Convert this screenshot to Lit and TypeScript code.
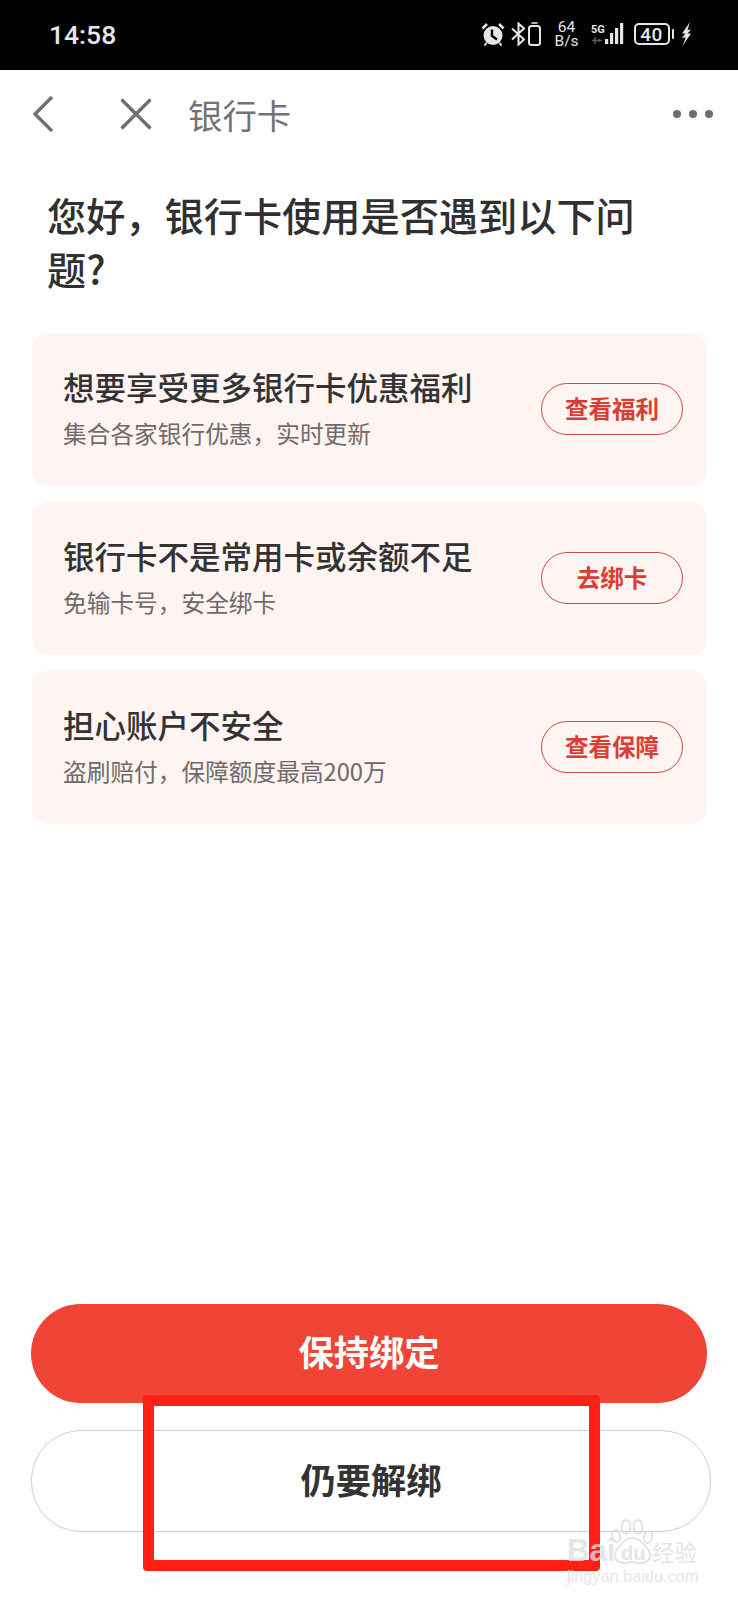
import { LitElement, html, css, svg } from "lit";
import { customElement } from "lit/decorators.js";

const cards = [
  { t: "想要享受更多银行卡优惠福利", s: "集合各家银行优惠，实时更新", b: "查看福利" },
  { t: "银行卡不是常用卡或余额不足", s: "免输卡号，安全绑卡", b: "去绑卡" },
  { t: "担心账户不安全", s: "盗刷赔付，保障额度最高200万", b: "查看保障" },
];

@customElement("app-root")
export class AppRoot extends LitElement {
  static styles = css`
    :host { display: block; width: 738px; height: 1600px; position: relative; overflow: hidden; background: #fff;
      font-family: "Noto Sans CJK SC", "Noto Sans", sans-serif; }
    .page { height: 1600px; display: flex; flex-direction: column; }
    .status { height: 70px; background: #000; color: #e6e6e6; display: flex; align-items: center; padding: 0 46px 0 49px; box-sizing: border-box; flex: none; }
    .time { font: 500 26.500px Roboto, sans-serif; margin-top: -2px; }
    .sicons { margin-left: auto; display: flex; align-items: center; margin-top: -2px; }
    .speed { font: 400 15.5px/14px Roboto, sans-serif; width: 24px; margin: 0 12px 0 14px; display: flex; flex-direction: column; align-items: center; }
    .battery { width: 32px; height: 18px; border: 2px solid #e6e6e6; border-radius: 5px; display: flex; align-items: center; justify-content: center; font: 500 19px Roboto, sans-serif; letter-spacing: .5px; }
    .nub { width: 2.500px; height: 10px; background: #e6e6e6; margin: 0 7px 0 2px; border-radius: 1px; }
    .nav { height: 90px; display: flex; align-items: center; flex: none; padding: 0 25px 0 31px; margin-top: -1px; }
    .nav-title { font-size: 34.400px; color: #737373; margin-left: 36px; line-height: 48px; }
    .gap { width: 65px; }
    .dots { margin-left: auto; display: flex; gap: 8px; }
    .dots i { width: 8px; height: 8px; border-radius: 50%; background: #6f6f6f; display: block; }
    h1 { font-size: 39.2px; line-height: 54px; font-weight: 500; color: #303030; margin: 28px 80px 0 47px; }
    .cards { margin: 38px 31px 0 32px; display: flex; flex-direction: column; gap: 16px; }
    .card { height: 153px; box-sizing: border-box; background: #fef4f2; border-radius: 16px; display: flex; align-items: center; padding: 0 24px 0 31px; }
    .text { flex: 1; min-width: 0; margin-top: -6px; }
    .ct { font-size: 31.5px; line-height: 44px; color: #333; font-weight: 500; }
    .cs { font-size: 23.7px; line-height: 34px; color: #6f6a6a; margin-top: 8px; }
    .cb { width: 142px; height: 52px; box-sizing: border-box; border: 1.5px solid #c9504a; border-radius: 26px; color: #dd3c33; font-size: 23.5px; font-weight: 700; display: flex; align-items: center; justify-content: center; margin-top: -1px; padding-bottom: 3px; }
    .bottom { margin-top: auto; padding: 0 26px 68px 31px; display: flex; flex-direction: column; gap: 27px; }
    .btn { border-radius: 50px; display: flex; align-items: center; justify-content: center; font-size: 35.300px; font-weight: 700; box-sizing: border-box; padding-bottom: 6px; }
    .primary { height: 99px; width: 676px; background: #f04436; color: #fff; }
    .secondary { height: 102px; width: 680px; border: 1.5px solid #cfcfcf; color: #333; background: #fff; }
    .mark { position: absolute; left: 143px; top: 1395px; width: 457px; height: 176px; box-sizing: border-box; border: 11px solid #ff2013; border-radius: 4px; }
    .wm { position: absolute; left: 567px; top: 1518px; width: 135px; height: 68px; color: rgba(222, 222, 222, .8); }
    .wm-bai { position: absolute; left: 0; top: 15px; font: 700 31px/36px "Liberation Sans", sans-serif; }
    .wm-du { position: absolute; left: 54px; top: 21px; font: 700 20px/28px "Liberation Sans", sans-serif; }
    .wm-cn { position: absolute; left: 85px; top: 15px; font: 400 22.5px/36px "Noto Sans CJK SC", sans-serif; white-space: nowrap; }
    .wm-url { position: absolute; left: 0; top: 49px; font: 400 16.3px/18px "Liberation Sans", sans-serif; white-space: nowrap; }
    .paw { position: absolute; left: 44px; top: 0; }
  `;

  render() {
    return html`
      <div class="page">
        <div class="status">
          <span class="time">14:58</span>
          <div class="sicons">
            <svg width="24" height="24" viewBox="0 0 24 24" style="margin-right:6px">
              <circle cx="12" cy="13.5" r="9.500" fill="#e6e6e6"/>
              <path d="M11 7.500V14l5 3.500" stroke="#000" stroke-width="2.400" fill="none"/>
              <path d="M1.500 6.500l4.500-4.500M22.500 6.500l-4.500-4.500" stroke="#e6e6e6" stroke-width="2.600"/>
              <path d="M3.500 23.500l2-2.500M20.500 23.500l-2-2.500" stroke="#e6e6e6" stroke-width="2"/>
            </svg>
            <svg width="14" height="24" viewBox="0 0 14 24" style="margin-right:3px">
              <path d="M1 6.500l12 11-5.500 5V1.500L13 6.500 1 17.500" stroke="#e6e6e6" stroke-width="2" fill="none"/>
            </svg>
            <svg width="13" height="24" viewBox="0 0 13 24">
              <rect x="3.500" y="0" width="6" height="2" fill="#b5b5b5"/>
              <rect x="1" y="4" width="11" height="19" rx="2.500" stroke="#e6e6e6" stroke-width="2" fill="none"/>
            </svg>
            <div class="speed"><span>64</span><span>B/s</span></div>
            <svg width="34" height="22" viewBox="0 0 34 22" style="margin-right:9px">
              <text x="0" y="10" font-size="11" font-weight="700" font-family="Roboto, sans-serif" fill="#e6e6e6">5G</text>
              <path d="M4 14v7M8 16v3M1 17.500h10" stroke="#5e5e5e" stroke-width="1.500"/>
              ${[[14, 16], [19, 10], [24, 5], [29, 0]].map(
                ([x, y]) => svg`<rect x=${x} y=${y} width="3.200" height=${21 - y} fill="#e6e6e6"/>`
              )}
            </svg>
            <div class="battery">40</div>
            <div class="nub"></div>
            <svg width="11" height="24" viewBox="0 0 11 24">
              <path d="M9 0L1 11.500h3.500L1 16l3.800-.5L1.500 24 10 11.500H6.500L10 7.500 6.500 8z" fill="#e6e6e6"/>
            </svg>
          </div>
        </div>
        <div class="nav">
          <svg width="24" height="38" viewBox="0 0 24 38"><path d="M21 2L4 19l17 17" stroke="#6f6f6f" stroke-width="3.400" fill="none"/></svg>
          <div class="gap"></div>
          <svg width="32" height="32" viewBox="0 0 32 32"><path d="M1.500 1.500l29 29M30.500 1.500l-29 29" stroke="#6f6f6f" stroke-width="3.400" fill="none"/></svg>
          <span class="nav-title">银行卡</span>
          <div class="dots"><i></i><i></i><i></i></div>
        </div>
        <h1>您好，银行卡使用是否遇到以下问题?</h1>
        <div class="cards">
          ${cards.map(
            (c) => html`<div class="card">
              <div class="text"><div class="ct">${c.t}</div><div class="cs">${c.s}</div></div>
              <div class="cb">${c.b}</div>
            </div>`
          )}
        </div>
        <div class="bottom">
          <div class="btn primary">保持绑定</div>
          <div class="btn secondary">仍要解绑</div>
        </div>
      </div>
      <div class="mark"></div>
      <div class="wm">
        <svg class="paw" width="44" height="48" viewBox="0 0 44 48">
          <g fill="none" stroke="rgba(215,215,215,.85)" stroke-width="1.500">
            <ellipse cx="5" cy="18" rx="4" ry="6" transform="rotate(-15 5 18)"/>
            <ellipse cx="15" cy="9" rx="4.500" ry="7"/>
            <ellipse cx="27" cy="9" rx="4.500" ry="7"/>
            <ellipse cx="37" cy="19" rx="4" ry="6" transform="rotate(15 37 19)"/>
            <path d="M21 20c-6 0-9 4-12 8-4 4-6 7-5 11 1 5 6 6 10 6 3 0 5-1 7-1s5 1 8 1c5 0 9-2 10-6 1-4-1-7-5-11-3-4-7-8-13-8z"/>
          </g>
        </svg>
        <span class="wm-bai">Bai</span>
        <span class="wm-du">du</span>
        <span class="wm-cn">经验</span>
        <span class="wm-url">jingyan.baidu.com</span>
      </div>
    `;
  }
}
